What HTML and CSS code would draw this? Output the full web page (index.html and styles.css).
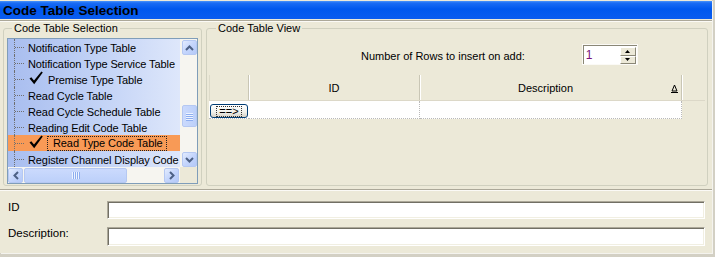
FILE: index.html
```html
<!DOCTYPE html>
<html>
<head>
<meta charset="utf-8">
<link rel="stylesheet" href="styles.css">
</head>
<body>
<div class="window">
  <div class="titlebar">Code Table Selection</div>
  <div class="etch"></div>
  <div class="top">
    <fieldset class="group group-left">
      <legend>Code Table Selection</legend>
      <div class="list">
        <div class="items">
          <div class="row"><span class="conn"></span><span class="txt">Notification Type Table</span></div>
          <div class="row"><span class="conn"></span><span class="txt">Notification Type Service Table</span></div>
          <div class="row"><span class="conn wide"></span><svg class="check" width="14" height="14" viewBox="0 0 14 14"><path d="M0.5 7.5 L2.3 6.3 L5 9.6 L12.4 0.5 L13.8 1.6 L5.2 13.2 Z" fill="#000"/></svg><span class="txt checked">Premise Type Table</span></div>
          <div class="row"><span class="conn"></span><span class="txt">Read Cycle Table</span></div>
          <div class="row"><span class="conn"></span><span class="txt">Read Cycle Schedule Table</span></div>
          <div class="row"><span class="conn"></span><span class="txt">Reading Edit Code Table</span></div>
          <div class="row selected"><span class="conn wide"></span><svg class="check" width="14" height="14" viewBox="0 0 14 14"><path d="M0.5 7.5 L2.3 6.3 L5 9.6 L12.4 0.5 L13.8 1.6 L5.2 13.2 Z" fill="#000"/></svg><span class="txt focus">Read Type Code Table</span></div>
          <div class="row"><span class="conn"></span><span class="txt">Register Channel Display Code Table</span></div>
        </div>
        <div class="vscroll">
          <div class="sb-btn"><svg width="9" height="6" viewBox="0 0 9 6"><path d="M1 5 L4.5 1.5 L8 5" fill="none" stroke="#4d6185" stroke-width="2"/></svg></div>
          <div class="sb-thumb-v"><span></span><span></span><span></span><span></span></div>
          <div class="sb-btn down"><svg width="9" height="6" viewBox="0 0 9 6"><path d="M1 1 L4.5 4.5 L8 1" fill="none" stroke="#4d6185" stroke-width="2"/></svg></div>
        </div>
        <div class="hscroll">
          <div class="sb-btn"><svg width="6" height="9" viewBox="0 0 6 9"><path d="M5 1 L1.5 4.5 L5 8" fill="none" stroke="#4d6185" stroke-width="2"/></svg></div>
          <div class="sb-thumb-h"><span></span><span></span><span></span><span></span></div>
          <div class="sb-btn right"><svg width="6" height="9" viewBox="0 0 6 9"><path d="M1 1 L4.5 4.5 L1 8" fill="none" stroke="#4d6185" stroke-width="2"/></svg></div>
        </div>
        <div class="corner"></div>
      </div>
    </fieldset>
    <fieldset class="group group-right">
      <legend>Code Table View</legend>
      <div class="spin-row">
        <span class="spin-label">Number of Rows to insert on add:</span>
        <div class="spinner">
          <div class="spin-input">1</div>
          <div class="spin-btns">
            <div class="spin-btn"><svg width="5" height="3" viewBox="0 0 5 3"><path d="M0 3 L2.5 0 L5 3 Z" fill="#000"/></svg></div>
            <div class="spin-btn"><svg width="5" height="3" viewBox="0 0 5 3"><path d="M0 0 L2.5 3 L5 0 Z" fill="#000"/></svg></div>
          </div>
        </div>
      </div>
      <div class="grid">
        <div class="grid-head">
          <div class="hcell c0"></div>
          <div class="hcell c1">ID</div>
          <div class="hcell c2"><span class="htext">Description</span><svg class="sort" width="7" height="9" viewBox="0 0 7 9"><path d="M3.5 1 L6 7 L1 7 Z" fill="none" stroke="#000" stroke-width="1"/><path d="M0 8.5 H7" stroke="#000" stroke-width="1"/></svg></div>
        </div>
        <div class="grid-row">
          <div class="dcell c0"><div class="go-btn"><span>==&gt;</span></div></div>
          <div class="dcell c1"></div>
          <div class="dcell c2"></div>
        </div>
      </div>
    </fieldset>
  </div>
  <div class="sep"></div>
  <div class="form">
    <label class="flabel">ID</label>
    <div class="finput"></div>
    <label class="flabel">Description:</label>
    <div class="finput"></div>
  </div>
</div>
</body>
</html>
```
FILE: styles.css
```css
* { box-sizing: border-box; }

html, body {
  margin: 0;
  padding: 0;
}

body {
  width: 715px;
  height: 257px;
  background: #d3d0c4;
  font-family: "Liberation Sans", Arial, sans-serif;
  font-size: 11px;
  color: #000;
  overflow: hidden;
}

.window {
  width: 712px;
  height: 253px;
  background: #ece9d8;
  display: flex;
  flex-direction: column;
  box-shadow: 1px 1px 0 #f4f3ee;
}

.titlebar {
  margin-top: 1px;
  height: 18px;
  padding: 2px 0 0 3px;
  line-height: 16px;
  font-size: 13.5px;
  font-weight: bold;
  color: #000;
  background: linear-gradient(#4a94fb 0, #1a6cf4 2px, #0058ee 8px, #0a5cf0 100%);
}

.etch {
  margin-top: 1px;
  border-top: 1px solid #aca899;
  border-bottom: 1px solid #fbfaf6;
}

.top {
  display: flex;
  padding-left: 3px;
}

.group {
  margin: 0;
  height: 164px;
  border: 1px solid #d0d0bf;
  border-radius: 3px;
  min-width: 0;
}

.group legend {
  padding: 0 2px;
  margin-left: 5px;
  line-height: 12px;
  font-size: 11px;
}

.group-left {
  width: 199px;
  padding: 0 3px 1px 3px;
}

.group-right {
  width: 502px;
  margin-left: 4px;
  padding: 0 2px 1px 2px;
}

.group-right legend {
  margin-left: 7px;
}

/* ---------- list ---------- */
.list {
  margin-top: 4px;
  width: 191px;
  height: 146px;
  border: 1px solid #7f9db9;
  display: grid;
  grid-template-columns: 172px 17px;
  grid-template-rows: 128px 16px;
}

.items {
  overflow: hidden;
  background: linear-gradient(to right, #a8bdef 0%, #c3d3f6 55%, #dee7fb 100%);
  white-space: nowrap;
  letter-spacing: -0.1px;
}

.row {
  height: 16px;
  display: flex;
  align-items: center;
  padding-left: 6px;
  padding-top: 1px;
}

.row.selected {
  background: #f89a56;
}

.conn {
  flex: none;
  width: 11px;
  height: 16px;
  margin-top: -1px;
  border-left: 1px dotted #6f6f6f;
  background: repeating-linear-gradient(to right, #6f6f6f 0 1px, transparent 1px 2px) left center / 100% 1px no-repeat;
}

.txt {
  margin-left: 3px;
}

.check {
  flex: none;
  margin-left: 4px;
  margin-top: -3px;
}

.txt.checked {
  margin-left: 5px;
}

.txt.focus {
  margin-left: 4px;
  padding: 0 3px 0 5px;
  line-height: 13px;
  border: 1px dotted #222;
}

.vscroll {
  background: #f6f5f0;
  display: flex;
  flex-direction: column;
  align-items: center;
  padding-left: 1px;
}

.sb-btn {
  width: 15px;
  height: 15px;
  flex: none;
  border: 1px solid #b5c8f2;
  border-radius: 2px;
  background: linear-gradient(135deg, #e3ecfe 0%, #c4d5fc 50%, #b4c9f8 100%);
  display: flex;
  align-items: center;
  justify-content: center;
}

.vscroll .sb-btn {
  margin-top: 1px;
}

.vscroll .sb-btn.down {
  margin-top: auto;
}

.sb-thumb-v {
  margin-top: 50px;
  width: 15px;
  height: 22px;
  border: 1px solid #b5c8f2;
  border-radius: 2px;
  background: linear-gradient(to right, #cbdafd, #bcd0fa);
  display: flex;
  flex-direction: column;
  align-items: center;
  justify-content: center;
  gap: 1px;
}

.sb-thumb-v span {
  width: 7px;
  height: 1px;
  background: #eef4ff;
  box-shadow: 0 1px 0 #8eaef0;
}

.hscroll {
  background: #f6f5f0;
  display: flex;
  align-items: center;
  padding-top: 1px;
}

.hscroll .sb-btn.right {
  margin-left: auto;
  margin-right: 1px;
}

.sb-thumb-h {
  margin-left: 1px;
  width: 103px;
  height: 15px;
  border: 1px solid #b5c8f2;
  border-radius: 2px;
  background: linear-gradient(#cbdafd, #bcd0fa);
  display: flex;
  align-items: center;
  justify-content: center;
  gap: 1px;
}

.sb-thumb-h span {
  width: 1px;
  height: 7px;
  background: #eef4ff;
  box-shadow: 1px 0 0 #8eaef0;
}

.corner {
  background: #ece9d8;
}

/* ---------- right group ---------- */
.spin-row {
  margin-top: 10px;
  height: 21px;
  display: flex;
  align-items: center;
  padding-left: 152px;
}

.spin-label {
  padding-top: 2px;
}

.spinner {
  margin-left: 57px;
  width: 56px;
  height: 21px;
  border: 1px solid #fbfaf6;
  background: #fff;
  display: flex;
}

.spin-input {
  flex: 1;
  border-top: 1px solid #8a8776;
  border-left: 1px solid #8a8776;
  padding-left: 2px;
  line-height: 18px;
  font-size: 12px;
  color: #7a127a;
}

.spin-btns {
  width: 17px;
  display: flex;
  flex-direction: column;
  padding: 1px 1px 0 0;
  border-top: 1px solid #8a8776;
}

.spin-btn {
  height: 9px;
  background: #ece9d8;
  border: 1px solid;
  border-color: #fff #8a8776 #8a8776 #fff;
  display: flex;
  align-items: center;
  justify-content: center;
}

.grid {
  margin-top: 10px;
}

.grid-head, .grid-row {
  display: flex;
}

.grid-head {
  height: 26px;
  border-bottom: 1px solid #dcd8c8;
}

.hcell {
  height: 25px;
  display: flex;
  align-items: center;
  justify-content: center;
  border-right: 1px solid #c9c6b5;
  box-shadow: 1px 0 0 #fff;
  padding-top: 1px;
}

.hcell.c0 {
  border-left: 1px solid #dddac9;
}

.c0 { width: 40px; }
.c1 { width: 171px; }
.c2 { width: 262px; }

.hcell.c2 {
  justify-content: flex-start;
}

.htext {
  flex: 1;
  text-align: center;
}

.sort {
  flex: none;
  margin-right: 3px;
}

.grid-row {
  height: 18px;
}

.dcell {
  height: 18px;
  background: #fff;
  border-bottom: 1px dotted #b9b9b9;
}

.dcell.c1, .dcell.c2 {
  border-right: 1px dotted #b9b9b9;
}

.dcell.c0 {
  padding: 3px 0 0 1px;
}

.go-btn {
  width: 38px;
  height: 14px;
  border: 1px solid #003c74;
  border-radius: 3px;
  background: linear-gradient(#ffffff, #f0f0ea 60%, #d6d0c5);
  display: flex;
  align-items: center;
  justify-content: center;
}

.go-btn span {
  border: 1px dotted #333;
  line-height: 9px;
  padding: 0 2px;
  font-size: 11px;
}

/* ---------- bottom form ---------- */
.sep {
  margin-top: 3px;
  border-top: 1px solid #aca899;
  border-bottom: 1px solid #fbfaf6;
}

.form {
  padding: 10px 0 0 8px;
  display: grid;
  grid-template-columns: 99px 598px;
  grid-template-rows: 18px 19px;
  row-gap: 8px;
}

.flabel {
  margin-top: 0;
  line-height: 13px;
  font-size: 11.5px;
}

.finput {
  background: #fff;
  border: 1px solid;
  border-color: #aca899 #fff #fff #aca899;
  box-shadow: inset 1px 1px 0 #716f64, inset -1px -1px 0 #f1efe2;
}
```
